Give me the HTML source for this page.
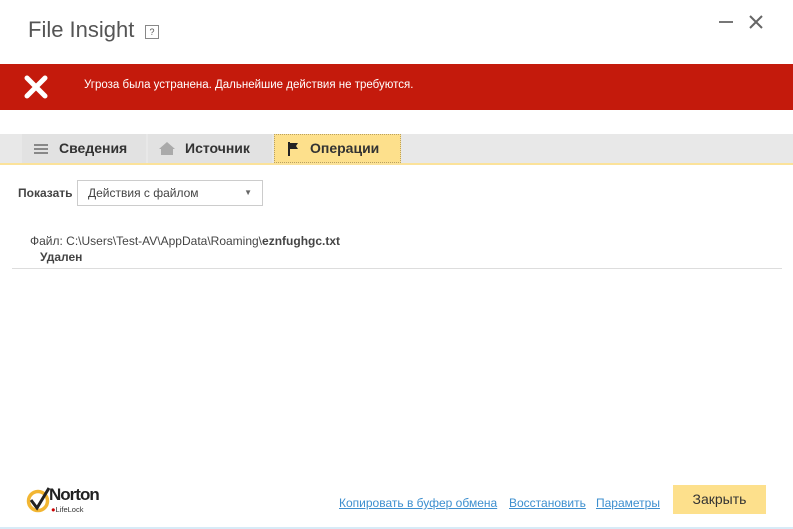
<!DOCTYPE html>
<html><head><meta charset="utf-8"><style>
body{margin:0;width:793px;height:529px;background:#fff;position:relative;overflow:hidden;font-family:"Segoe UI","Liberation Sans","DejaVu Sans",sans-serif;color:#333}
.a{position:absolute}
.tab{position:absolute;top:134px;height:29px;background:#e2e2e2;font-weight:bold;font-size:14px;color:#333;line-height:29px}
a{color:#3d8fcf;text-decoration:underline;font-size:12px}
</style></head><body>
<div class="a" style="left:28px;top:17px;font-size:22px;color:#555">File Insight</div>
<div class="a" style="left:145px;top:25px;width:12px;height:12px;border:1px solid #888;font-size:9px;line-height:12px;text-align:center;color:#555">?</div>
<div class="a" style="left:719px;top:21px;width:14px;height:2px;background:#777"></div>
<svg class="a" style="left:749px;top:15px" width="14" height="14"><path d="M1 1L13 13M13 1L1 13" stroke="#666" stroke-width="2"/></svg>
<div class="a" style="left:0;top:64px;width:793px;height:46px;background:#c41a0c"></div>
<svg class="a" style="left:24px;top:75px" width="24" height="24"><path d="M3 3L21 21M21 3L3 21" stroke="#fff" stroke-width="5" stroke-linecap="round"/></svg>
<div class="a" style="left:84px;top:79px;color:#fff;font-size:11.5px">Угроза была устранена. Дальнейшие действия не требуются.</div>
<div class="a" style="left:0;top:134px;width:793px;height:29px;background:#e8e8e8"></div>
<div class="a" style="left:0;top:163px;width:793px;height:2px;background:#fbe29a"></div>
<div class="tab" style="left:22px;width:124px"><span style="position:absolute;left:12px;top:10px;width:14px;height:10px;background:repeating-linear-gradient(#888 0 2px,transparent 2px 4px)"></span><span style="position:absolute;left:37px">Сведения</span></div>
<div class="tab" style="left:148px;width:124px"><svg style="position:absolute;left:11px;top:8px" width="16" height="13"><path d="M8 0L16 7H14V13H2V7H0Z" fill="#aaa"/></svg><span style="position:absolute;left:37px">Источник</span></div>
<div class="tab" style="left:274px;width:127px;background:#fde08c;outline:1px dotted #b9a060;outline-offset:-1px"><svg style="position:absolute;left:14px;top:8px" width="12" height="14"><path d="M1 0V14" stroke="#222" stroke-width="2"/><path d="M2 1H10L8 4L10 7H2Z" fill="#222"/></svg><span style="position:absolute;left:36px">Операции</span></div>
<div class="a" style="left:18px;top:186px;font-size:12px;font-weight:bold;color:#444">Показать</div>
<div class="a" style="left:77px;top:180px;width:184px;height:24px;border:1px solid #ccc;font-size:12px;line-height:24px;color:#444"><span style="margin-left:10px">Действия с файлом</span><span style="position:absolute;right:10px;top:0;font-size:8px;color:#666">▼</span></div>
<div class="a" style="left:30px;top:234px;font-size:12px;color:#444">Файл: C:\Users\Test-AV\AppData\Roaming\<b>eznfughgc.txt</b></div>
<div class="a" style="left:40px;top:250px;font-size:12px;font-weight:bold;color:#444">Удален</div>
<div class="a" style="left:12px;top:268px;width:770px;height:1px;background:#ddd"></div>
<svg class="a" style="left:26px;top:486px" width="26" height="28"><circle cx="12" cy="15" r="9.5" fill="none" stroke="#f2b632" stroke-width="3.5"/><path d="M5 14L11 22L23 2" fill="none" stroke="#222" stroke-width="3"/></svg>
<div class="a" style="left:49px;top:485px;font-size:17px;font-weight:bold;color:#222;letter-spacing:-1px">Norton</div>
<div class="a" style="left:51px;top:505px;font-size:7.5px;color:#333"><span style="color:#c00">●</span>LifeLock</div>
<div class="a" style="left:339px;top:494px"><a>Копировать в буфер обмена</a></div>
<div class="a" style="left:509px;top:494px"><a>Восстановить</a></div>
<div class="a" style="left:596px;top:494px"><a>Параметры</a></div>
<div class="a" style="left:673px;top:485px;width:93px;height:29px;background:#fde08c;font-size:14px;line-height:29px;text-align:center;color:#333">Закрыть</div>
<div class="a" style="left:0;top:527px;width:793px;height:2px;background:#d8ebf7"></div>
</body></html>
